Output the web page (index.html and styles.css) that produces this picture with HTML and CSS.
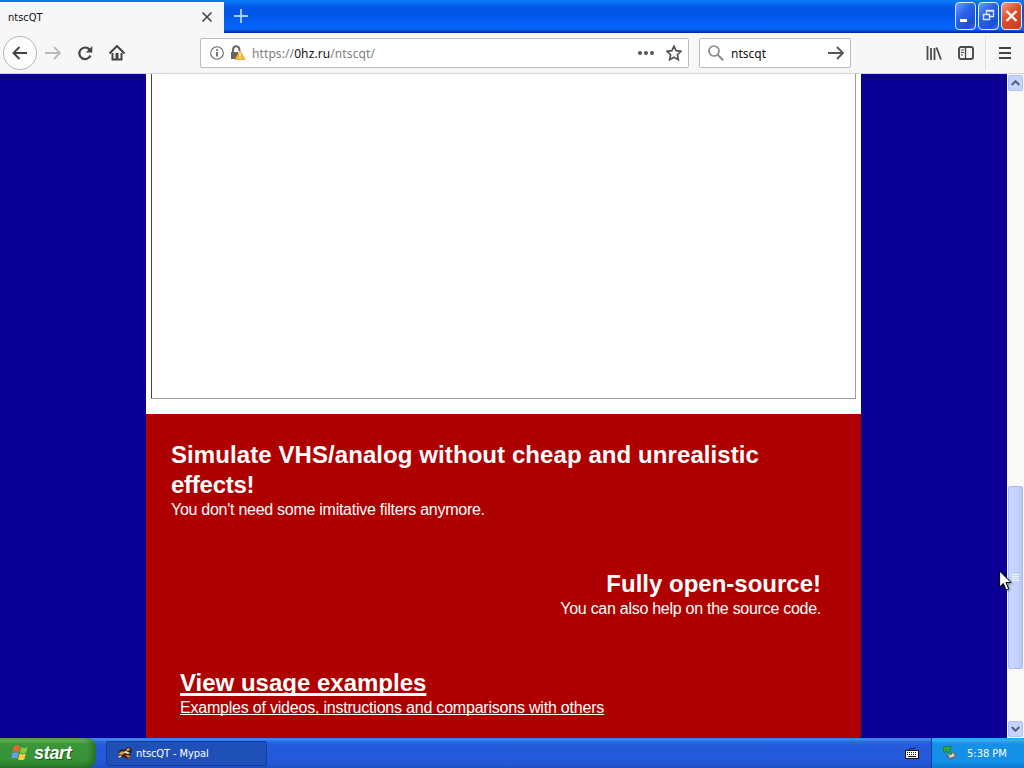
FILE: index.html
```
<!DOCTYPE html>
<html lang="en">
<head>
    <meta charset="UTF-8">
    <meta name="viewport" content="width=device-width, initial-scale=1.0">
    <title>ntscQT</title>
    <link rel="stylesheet" href="styles.css">
</head>
<body>

    <!-- Title bar -->
    <header class="titlebar">
        <div class="tab">
            <span class="tab-title">ntscQT</span>
            <svg width="12" height="12" viewBox="0 0 12 12"><path d="M1.5 1.5l9 9M10.5 1.5l-9 9" stroke="#444" stroke-width="1.6" fill="none"/></svg>
        </div>
        <div class="new-tab">
            <svg width="14" height="14" viewBox="0 0 14 14"><path d="M7 0v14M0 7h14" stroke="#a9d0ff" stroke-width="1.8"/></svg>
        </div>
        <div class="window-buttons">
            <button class="win-btn"><svg width="19" height="26" viewBox="0 0 19 26"><path d="M4 16h7v3H4z" fill="#fff"/></svg></button>
            <button class="win-btn"><svg width="19" height="26" viewBox="0 0 19 26"><path d="M7.500 11V7.500h7v6H11M7 8h8" fill="none" stroke="#dfeaff" stroke-width="1.300"/><path d="M4.500 11.500h6v5h-6zM4 11.500h7" fill="none" stroke="#dfeaff" stroke-width="1.400"/></svg></button>
            <button class="win-btn close"><svg width="19" height="26" viewBox="0 0 19 26"><path d="M4.500 8l10 10M14.500 8l-10 10" stroke="#fff" stroke-width="2.300"/></svg></button>
        </div>
    </header>

    <!-- Toolbar -->
    <nav class="toolbar">
        <div class="nav-buttons">
            <span class="back"><svg width="16" height="16" viewBox="0 0 16 16"><path d="M15 8H2M7.500 2L1.500 8l6 6" fill="none" stroke="#444" stroke-width="2"/></svg></span>
            <svg class="forward" width="16" height="16" viewBox="0 0 16 16"><path d="M0 8h14M9 2l6 6-6 6" fill="none" stroke="#b9b9b9" stroke-width="1.800"/></svg>
            <svg class="reload" width="16" height="16" viewBox="0 0 16 16"><path d="M12.500 4.500A5.800 5.800 0 1 0 13.500 10.500" fill="none" stroke="#444" stroke-width="2.200"/><path d="M15.300 1v6.500H8.800z" fill="#444"/></svg>
            <svg class="home" width="16" height="16" viewBox="0 0 16 16"><path d="M0.500 8.500L8 1l7.500 7.500" fill="none" stroke="#444" stroke-width="2"/><path d="M3.500 8v6.500h9V8" fill="none" stroke="#444" stroke-width="2"/><path d="M6.500 8h3v6h-3z" fill="#444"/></svg>
        </div>

        <div class="urlbar">
            <svg width="14" height="14" viewBox="0 0 14 14"><circle cx="7" cy="7" r="6.300" fill="none" stroke="#666" stroke-width="1.100"/><path d="M7 6v4.500M7 3.300v1.600" stroke="#555" stroke-width="1.600"/></svg>
            <svg class="lock" width="16" height="16" viewBox="0 0 16 16"><path d="M3 8V4.500a3.200 3.200 0 0 1 6.400 0V6" fill="none" stroke="#666" stroke-width="2"/><path d="M1 7h7v7H1z" fill="#666"/><path d="M10 5.500l5 9H5z" fill="#fdb920" stroke="#e79a1a" stroke-width=".7"/><path d="M10 8v3.200M10 12v1.300" stroke="#fff" stroke-width="1.300"/></svg>
            <span class="url">https://<b>0hz.ru</b>/ntscqt/</span>
            <svg class="dots" width="16" height="6" viewBox="0 0 16 6"><circle cx="2" cy="3" r="2" fill="#555"/><circle cx="8" cy="3" r="2" fill="#555"/><circle cx="14" cy="3" r="2" fill="#555"/></svg>
            <svg width="16" height="16" viewBox="0 0 16 16"><path d="M8 1.200l2.100 4.500 4.900.600-3.600 3.400.900 5L8 12.300l-4.300 2.400.900-5L1 6.300l4.900-.600z" fill="none" stroke="#555" stroke-width="1.700"/></svg>
        </div>

        <div class="searchbar">
            <svg width="16" height="16" viewBox="0 0 16 16"><circle cx="6" cy="6" r="5" fill="none" stroke="#8a8a8a" stroke-width="1.700"/><path d="M9.700 9.700l5.500 5.500" stroke="#8a8a8a" stroke-width="2"/></svg>
            <span class="query">ntscqt</span>
            <svg width="16" height="14" viewBox="0 0 16 14"><path d="M0 7h15M9 1l6 6-6 6" fill="none" stroke="#555" stroke-width="1.800"/></svg>
        </div>

        <div class="tools">
            <svg width="16" height="14" viewBox="0 0 16 14"><path d="M1.500 0v14M5 2v12M8.500 2v12M10.500 1.500l4.500 12" fill="none" stroke="#4a4a4a" stroke-width="1.800"/></svg>
            <svg width="16" height="14" viewBox="0 0 16 14"><rect x="1" y="1" width="14" height="12" rx="2" fill="none" stroke="#4a4a4a" stroke-width="1.900"/><path d="M7.500 1v12" stroke="#4a4a4a" stroke-width="1.400"/><path d="M3 4h3M3 6.500h3M3 9h2" stroke="#4a4a4a"/></svg>
        </div>
        <div class="menu">
            <svg width="12" height="12" viewBox="0 0 12 12"><path d="M0 1h12M0 6h12M0 11h12" stroke="#444" stroke-width="1.800"/></svg>
        </div>
    </nav>

    <!-- Page -->
    <div class="viewport">
        <main class="page">
            <div class="column">
                <div class="frame-wrap">
                    <div class="frame"></div>
                </div>
                <div class="features">
                    <section class="feature">
                        <h2><span class="wide">Simulate VHS/analog without cheap and unrealistic</span> <span class="tight">effects!</span></h2>
                        <p>You don't need some imitative filters anymore.</p>
                    </section>
                    <section class="feature right">
                        <h2>Fully open-source!</h2>
                        <p>You can also help on the source code.</p>
                    </section>
                    <a class="feature link" href="#">
                        <h2>View usage examples</h2>
                        <p>Examples of videos, instructions and comparisons with others</p>
                    </a>
                </div>
            </div>
        </main>
        <div class="scrollbar">
            <span class="arrow"><svg width="9" height="6" viewBox="0 0 9 6"><path d="M.7 5l3.800-3.800L8.300 5" fill="none" stroke="#4d6185" stroke-width="2"/></svg></span>
            <span class="track"><span class="thumb"><i></i><i></i><i></i><i></i></span></span>
            <span class="arrow"><svg width="9" height="6" viewBox="0 0 9 6"><path d="M.7 1l3.800 3.800L8.300 1" fill="none" stroke="#4d6185" stroke-width="2"/></svg></span>
        </div>
        <svg class="cursor" width="13" height="21" viewBox="0 0 13 21"><path d="M.6 1v16l3.700-3.500 2.800 6.500 2.600-1.100L7 12.500h5z" fill="#fff" stroke="#000"/></svg>
    </div>

    <!-- Taskbar -->
    <footer class="taskbar">
        <button class="start">
            <svg width="18" height="18" viewBox="0 0 18 18"><path d="M3 2.500q3-2 6 0L7.700 8q-3-1.700-6 0z" fill="#f0652f"/><path d="M10 3q3 1.800 6.500 0L15 8.700q-3 1.500-6.200-.2z" fill="#86c83c"/><path d="M1.500 9q3-1.700 6 0L6.200 14.500q-3-1.700-6 0z" fill="#6c9cf0"/><path d="M8.600 9.500q3 1.700 6.200 0L13.300 15.200q-3 1.700-6.200 0z" fill="#fbd03b"/></svg>
            <span>start</span>
        </button>
        <div class="task">
            <svg width="16" height="14" viewBox="0 0 16 14"><path d="M1 7l3-4 3 1 3-3 4 1 1 4-2 2 1 3-4 2-4-2-3 1z" fill="#2e2118"/><path d="M1 8l4-3 3 2-3 2zM9 3l3-1 1 2-3 1z" fill="#e59a45"/><path d="M6 6l3-1 4 2-2 1-3-1zM1 10l4-.5L3 12z" fill="#f5e8cf"/><path d="M8 9l3 3 3-1-2-2z" fill="#c87828"/></svg>
            <span>ntscQT - Mypal</span>
        </div>
        <svg class="keyboard" width="14" height="14" viewBox="0 0 14 14"><path d="M4 4q0-2 3-1.500T11 1" fill="none" stroke="#0c1c50"/><rect x=".5" y="4.500" width="13" height="8" fill="#fff" stroke="#111"/><path d="M2 6.500h10M2 8.500h10" stroke="#111" stroke-dasharray="1 1"/><path d="M3 10.500h8" stroke="#111"/></svg>
        <div class="tray">
            <svg width="16" height="16" viewBox="0 0 16 16"><path d="M5 9l7-2 3 4-6 4-4-2z" fill="#626b72"/><path d="M6 9l5-1 2 3-5 2z" fill="#cfd5d9"/><path d="M1 2l8-1v3L7 5l3 4-2 1-4-4-2 2z" fill="#2eab36" stroke="#176c28" stroke-width=".6"/></svg>
            <span class="clock">5:38 PM</span>
        </div>
    </footer>

</body>
</html>
```
FILE: styles.css
```
* {
    box-sizing: border-box;
}

body {
    margin: 0;
    width: 1024px;
    height: 768px;
    overflow: hidden;
    display: flex;
    flex-direction: column;
    font-family: "DejaVu Sans Condensed", "DejaVu Sans", sans-serif;
    font-size: 11px;
}

svg {
    display: block;
    flex: none;
}

button {
    border: none;
    padding: 0;
}

.titlebar {
    height: 33px;
    flex: none;
    display: flex;
    padding-top: 2px;
    background: linear-gradient(#0a7bf5 0, #0a76f5 2px, #0560ea 5px, #0255e5 10px, #0259ee 18px, #0564fa 26px, #0360f2 30px, #002f9c 32px);
}

.tab {
    width: 224px;
    display: flex;
    align-items: center;
    justify-content: space-between;
    padding: 0 11px 1px 8px;
    background: #f7f7f8;
    color: #111;
}

.new-tab {
    padding: 7px 10px;
}

.window-buttons {
    display: flex;
    gap: 2px;
    margin-left: auto;
    padding-right: 2px;
}

.win-btn {
    width: 21px;
    height: 28px;
    overflow: hidden;
    border: 1px solid #e4edff;
    border-radius: 4px;
    background: linear-gradient(135deg, #6d9aff, #2a62e8 40%, #1a50d8 80%, #3d78f4);
}

.win-btn.close {
    background: linear-gradient(135deg, #f29a80, #dc4e2c 45%, #cc3b16);
}

.toolbar {
    height: 41px;
    flex: none;
    display: flex;
    align-items: center;
    border-bottom: 1px solid #d5d5d8;
    background: #f7f7f8;
}

.nav-buttons {
    width: 200px;
    display: flex;
    align-items: center;
    padding-left: 3px;
}

.back {
    width: 34px;
    height: 34px;
    display: flex;
    align-items: center;
    justify-content: center;
    border: 1px solid #b5b5b5;
    border-radius: 50%;
    background: #fdfdfd;
}

.forward {
    margin-left: 8px;
}

.reload,
.home {
    margin-left: 16px;
}

.urlbar,
.searchbar {
    height: 30px;
    display: flex;
    align-items: center;
    border: 1px solid #bcbcbc;
    border-radius: 2px;
    background: #fff;
    font-family: "Noto Sans", "Open Sans", sans-serif;
    font-size: 12px;
}

.urlbar {
    width: 489px;
    padding: 0 6px 0 9px;
}

.lock {
    margin-left: 6px;
}

.url {
    margin-left: 6px;
    margin-right: auto;
    color: #808080;
    letter-spacing: 0.1px;
}

.url b {
    font-weight: normal;
    color: #111;
}

.dots {
    margin-right: 12px;
}

.searchbar {
    width: 152px;
    margin-left: 10px;
    padding: 0 6px 0 8px;
}

.query {
    margin-left: 7px;
    margin-right: auto;
    color: #111;
}

.tools {
    display: flex;
    gap: 16px;
    margin-left: auto;
    padding-right: 11px;
}

.menu {
    height: 34px;
    width: 39px;
    display: flex;
    align-items: center;
    padding-left: 13px;
    border-left: 1px solid #dedede;
}

.viewport {
    position: relative;
    flex: 1;
    min-height: 0;
    display: flex;
    overflow: hidden;
}

.page {
    width: 1007px;
    padding-left: 146px;
    background: #0b0095;
}

.column {
    width: 715px;
    height: 100%;
    display: flex;
    flex-direction: column;
    font-family: "Liberation Sans", Arial, sans-serif;
}

.frame-wrap {
    height: 340px;
    flex: none;
    padding: 0 5px 15px;
    background: #fff;
}

.frame {
    height: 325px;
    border: 1px solid #9c9c9c;
    border-left-color: #444;
    border-top: none;
}

.features {
    flex: 1;
    padding: 26px 25px 0;
    background: #af0000;
    color: #fff;
}

.feature {
    display: block;
    margin-bottom: 50px;
}

.feature h2 {
    margin: 0;
    font-size: 24px;
    line-height: 30px;
}

.feature p {
    margin: 0;
    font-size: 16px;
    line-height: 19px;
    letter-spacing: -0.27px;
}

.wide {
    letter-spacing: 0.08px;
}

.tight {
    letter-spacing: -0.25px;
}

.right {
    padding-right: 15px;
    text-align: right;
}

.link {
    margin-bottom: 0;
    padding-left: 9px;
    color: #fff;
    text-decoration: none;
}

.link h2,
.link p {
    text-decoration: underline;
    text-decoration-skip-ink: none;
}

.link h2 {
    text-decoration-thickness: 3px;
    text-underline-offset: 2px;
}

.link p {
    letter-spacing: -0.21px;
}

.scrollbar {
    width: 17px;
    display: flex;
    flex-direction: column;
    padding: 1px 0;
    background: #f9f9f5;
}

.arrow {
    width: 15px;
    height: 16px;
    margin-left: 1px;
    display: flex;
    align-items: center;
    justify-content: center;
    border: 1px solid #b2c3f2;
    border-radius: 2px;
    background: #c6d4fc;
}

.track {
    flex: 1;
    padding: 395px 1px 0;
}

.thumb {
    height: 183px;
    display: flex;
    flex-direction: column;
    align-items: center;
    justify-content: center;
    gap: 1px;
    border: 1px solid #a9bbe8;
    border-radius: 2px;
    background: linear-gradient(90deg, #cad8ff, #c3d2fd 60%, #b6c8f8);
}

.thumb i {
    width: 7px;
    height: 1px;
    background: #eef4fe;
}

.cursor {
    position: absolute;
    left: 999px;
    top: 496px;
    filter: drop-shadow(1px 1px 1px rgba(0, 0, 0, 0.4));
}

.taskbar {
    height: 30px;
    flex: none;
    display: flex;
    align-items: center;
    background: linear-gradient(#3168d5 0, #4993ee 1px, #2f6ee4 3px, #245bdb 7px, #2359d9 25px, #1d4ec0 30px);
    color: #fff;
}

.start {
    width: 96px;
    height: 30px;
    display: flex;
    align-items: center;
    gap: 5px;
    padding-left: 11px;
    border-radius: 0 9px 9px 0;
    background: linear-gradient(#5caa5a 0, #69b465 2px, #3c963c 6px, #369236 22px, #2b7e2c 30px);
    box-shadow: inset -4px 0 5px rgba(20, 80, 20, 0.5);
    color: #fff;
    font: italic bold 18px "Liberation Sans", sans-serif;
    letter-spacing: -0.3px;
    text-shadow: 1px 1px 1px #1c531c;
}

.start span {
    line-height: 26px;
}

.task {
    width: 161px;
    height: 25px;
    display: flex;
    align-items: center;
    gap: 3px;
    margin-left: 10px;
    padding-left: 10px;
    border: 1px solid #173d9c;
    border-radius: 2px;
    background: #1e50b8;
    letter-spacing: -0.1px;
}

.keyboard {
    margin-left: auto;
    margin-right: 12px;
}

.tray {
    width: 93px;
    height: 30px;
    display: flex;
    align-items: center;
    padding-left: 10px;
    border-left: 1px solid #0d3a9a;
    background: linear-gradient(#19a5ee 0, #27b5f3 2px, #1590e8 6px, #1390e7 24px, #0f77cd 30px);
}

.clock {
    margin-left: 9px;
}
```
